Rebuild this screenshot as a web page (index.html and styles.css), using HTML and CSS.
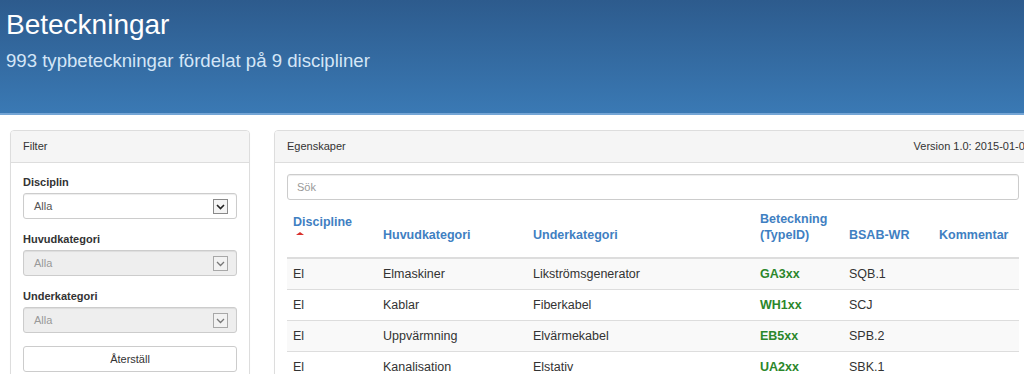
FILE: index.html
```html
<!DOCTYPE html>
<html lang="sv">

<head>
    <meta charset="UTF-8" />
    <meta name="viewport" content="width=device-width, initial-scale=1.0" />
    <title>Beteckningar</title>
    <link rel="stylesheet" href="styles.css">
</head>

<body>
    <header class="masthead">
        <h1>Beteckningar</h1>
        <p>993 typbeteckningar fördelat på 9 discipliner</p>
    </header>

    <main class="page">
        <aside class="panel">
            <div class="panel-heading">Filter</div>
            <div class="panel-body">
                <div class="form-group">
                    <label>Disciplin</label>
                    <div class="select">
                        <span>Alla</span>
                        <svg class="select-arrow" width="15" height="15" viewBox="0 0 15 15">
                            <rect x="0.5" y="0.5" width="14" height="14" fill="#f4f4f4" stroke="#8a8a8a" />
                            <path d="M4 6 L7.5 9.5 L11 6" fill="none" stroke="#222" stroke-width="1.6" />
                        </svg>
                    </div>
                </div>
                <div class="form-group">
                    <label>Huvudkategori</label>
                    <div class="select disabled">
                        <span>Alla</span>
                        <svg class="select-arrow" width="15" height="15" viewBox="0 0 15 15">
                            <rect x="0.5" y="0.5" width="14" height="14" fill="#f2f2f2" stroke="#a8a8a8" />
                            <path d="M4 6 L7.5 9.5 L11 6" fill="none" stroke="#777" stroke-width="1.3" />
                        </svg>
                    </div>
                </div>
                <div class="form-group">
                    <label>Underkategori</label>
                    <div class="select disabled">
                        <span>Alla</span>
                        <svg class="select-arrow" width="15" height="15" viewBox="0 0 15 15">
                            <rect x="0.5" y="0.5" width="14" height="14" fill="#f2f2f2" stroke="#a8a8a8" />
                            <path d="M4 6 L7.5 9.5 L11 6" fill="none" stroke="#777" stroke-width="1.3" />
                        </svg>
                    </div>
                </div>
                <button class="btn" type="button">Återställ</button>
            </div>
        </aside>

        <section class="panel">
            <div class="panel-heading">
                <span>Egenskaper</span>
                <span class="version">Version 1.0: 2015-01-01</span>
            </div>
            <div class="panel-body">
                <input class="search" type="text" placeholder="Sök">
                <table class="table">
                    <thead>
                        <tr>
                            <th class="col-disc">Discipline<div class="sort"><span class="caret"></span></div></th>
                            <th class="col-huvud">Huvudkategori</th>
                            <th class="col-under">Underkategori</th>
                            <th class="col-bet">Beteckning<br>(TypeID)</th>
                            <th class="col-bsab">BSAB-WR</th>
                            <th>Kommentar</th>
                        </tr>
                    </thead>
                    <tbody>
                        <tr>
                            <td>El</td>
                            <td>Elmaskiner</td>
                            <td>Likströmsgenerator</td>
                            <td class="typeid">GA3xx</td>
                            <td>SQB.1</td>
                            <td></td>
                        </tr>
                        <tr>
                            <td>El</td>
                            <td>Kablar</td>
                            <td>Fiberkabel</td>
                            <td class="typeid">WH1xx</td>
                            <td>SCJ</td>
                            <td></td>
                        </tr>
                        <tr>
                            <td>El</td>
                            <td>Uppvärmning</td>
                            <td>Elvärmekabel</td>
                            <td class="typeid">EB5xx</td>
                            <td>SPB.2</td>
                            <td></td>
                        </tr>
                        <tr>
                            <td>El</td>
                            <td>Kanalisation</td>
                            <td>Elstativ</td>
                            <td class="typeid">UA2xx</td>
                            <td>SBK.1</td>
                            <td></td>
                        </tr>
                    </tbody>
                </table>
            </div>
        </section>
    </main>
</body>

</html>
```

FILE: styles.css
```css
html,
body {
    margin: 0;
    padding: 0;
    overflow: hidden;
}

body {
    font-family: "Liberation Sans", Arial, sans-serif;
    font-size: 11px;
    color: #333;
    background-color: #fff;
}

.masthead {
    height: 115px;
    box-sizing: border-box;
    padding: 9px 6px 0;
    background: linear-gradient(to bottom, #2d5b8d, #3a79b4);
    border-bottom: 2px solid #74a5d5;
}

.masthead h1 {
    margin: 0;
    font-size: 28px;
    font-weight: normal;
    line-height: 31px;
    color: #fff;
}

.masthead p {
    margin: 10px 0 0;
    font-size: 18.6px;
    line-height: 22px;
    color: #d4e6f7;
}

.page {
    display: grid;
    grid-template-columns: 240px 758px;
    column-gap: 24px;
    align-items: start;
    padding: 15px 10px 0;
}

.panel {
    border: 1px solid #ddd;
    border-radius: 4px;
    background-color: #fff;
    box-shadow: 0 1px 1px rgba(0, 0, 0, 0.05);
}

.panel-heading {
    display: flex;
    justify-content: space-between;
    padding: 8px 0 8px 12px;
    line-height: 15px;
    background-color: #f5f5f5;
    border-bottom: 1px solid #ddd;
    border-radius: 3px 3px 0 0;
}

.panel-body {
    padding: 12px;
}

.form-group {
    margin-bottom: 13px;
}

.form-group label {
    display: block;
    margin-bottom: 3px;
    font-weight: bold;
    line-height: 15px;
}

.select {
    height: 26px;
    box-sizing: border-box;
    display: flex;
    align-items: center;
    justify-content: space-between;
    padding: 0 8px 0 10px;
    border: 1px solid #ccc;
    border-radius: 3px;
    box-shadow: inset 0 1px 1px rgba(0, 0, 0, 0.075);
    color: #555;
}

.select.disabled {
    background-color: #eee;
    color: #999;
}

.btn {
    display: block;
    width: 100%;
    height: 26px;
    padding: 0;
    font-family: inherit;
    font-size: 11px;
    color: #333;
    background-color: #fff;
    border: 1px solid #ccc;
    border-radius: 3px;
}

.search {
    display: block;
    width: 100%;
    height: 26px;
    box-sizing: border-box;
    margin: -1px 0 0;
    padding: 0 9px;
    font-family: inherit;
    font-size: 11px;
    border: 1px solid #ccc;
    border-radius: 3px;
    box-shadow: inset 0 1px 1px rgba(0, 0, 0, 0.075);
}

.search::placeholder {
    color: #999;
}

.table {
    width: 100%;
    table-layout: fixed;
    border-collapse: separate;
    border-spacing: 0;
    font-size: 12.5px;
}

.table th {
    padding: 11px 6px 14px;
    line-height: 16px;
    text-align: left;
    vertical-align: bottom;
    color: #3f80c2;
    border-bottom: 2px solid #ddd;
}

.table td {
    padding: 7px 6px;
    line-height: 16px;
    border-bottom: 1px solid #ddd;
}

.table tbody tr:nth-child(odd) td {
    background-color: #f9f9f9;
}

.col-disc {
    width: 78px;
}

.col-huvud {
    width: 138px;
}

.col-under {
    width: 215px;
}

.col-bet {
    width: 77px;
}

.col-bsab {
    width: 78px;
}

.sort {
    height: 11px;
}

.caret {
    display: block;
    width: 0;
    height: 0;
    margin: 2px 0 0 3px;
    border-left: 4px solid transparent;
    border-right: 4px solid transparent;
    border-bottom: 3px solid #d9302c;
}

.typeid {
    font-weight: bold;
    color: #2b872b;
}
```
